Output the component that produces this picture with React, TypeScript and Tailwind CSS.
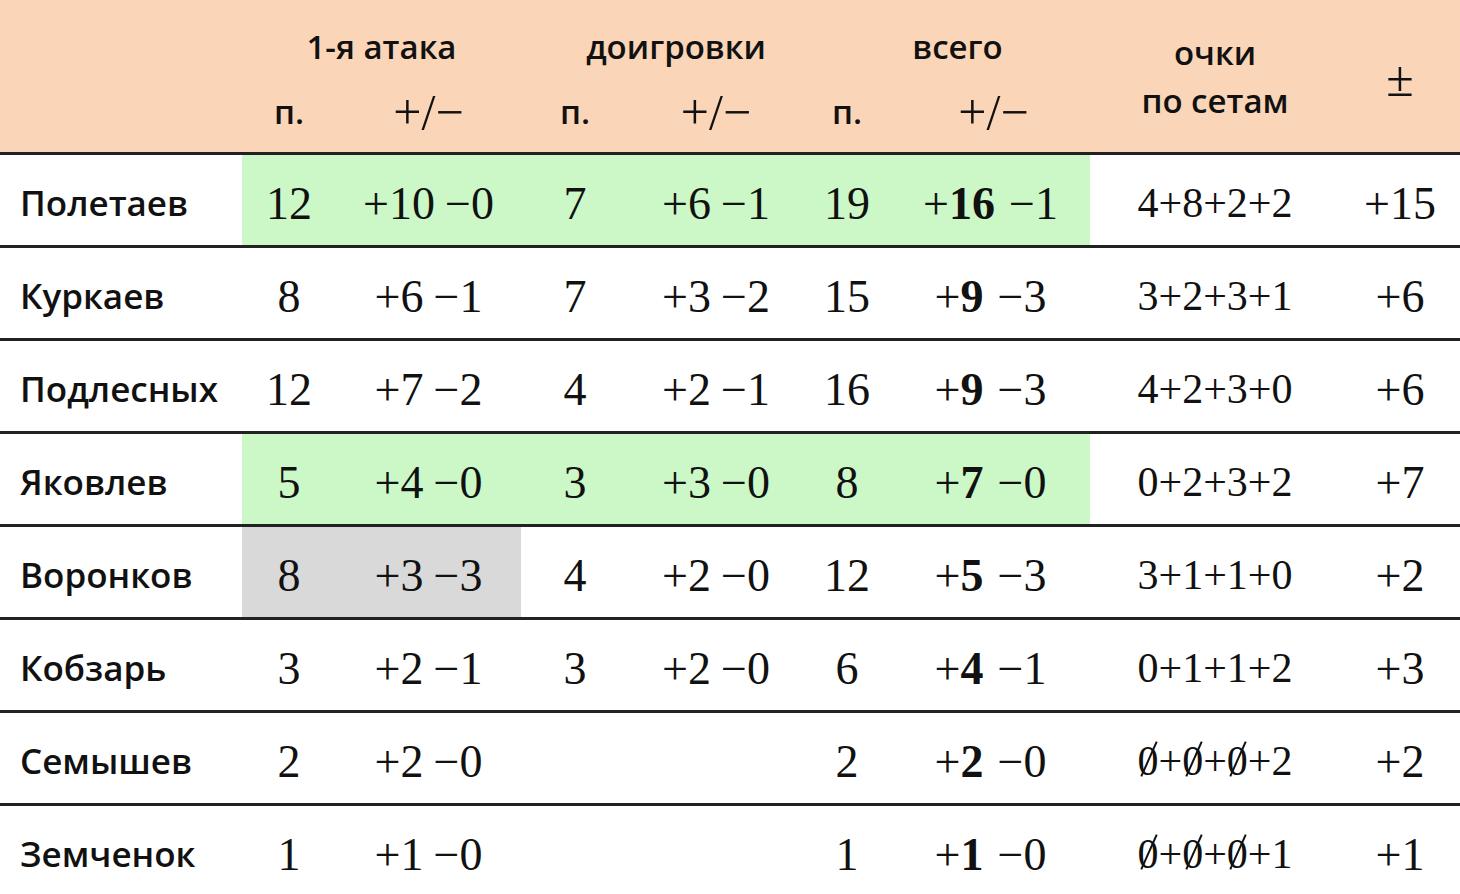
import React from 'react';

type Row = {
  name: string;
  p1: string;
  pm1: [string, string];
  p2: string;
  pm2: [string, string] | null;
  p3: string;
  pm3: [string, string];
  sets: string;
  total: string;
  green?: boolean;
  gray?: boolean;
};

const rows: Row[] = [
  { name: 'Полетаев', p1: '12', pm1: ['+10', '−0'], p2: '7', pm2: ['+6', '−1'], p3: '19', pm3: ['16', '−1'], sets: '4+8+2+2', total: '+15', green: true },
  { name: 'Куркаев', p1: '8', pm1: ['+6', '−1'], p2: '7', pm2: ['+3', '−2'], p3: '15', pm3: ['9', '−3'], sets: '3+2+3+1', total: '+6' },
  { name: 'Подлесных', p1: '12', pm1: ['+7', '−2'], p2: '4', pm2: ['+2', '−1'], p3: '16', pm3: ['9', '−3'], sets: '4+2+3+0', total: '+6' },
  { name: 'Яковлев', p1: '5', pm1: ['+4', '−0'], p2: '3', pm2: ['+3', '−0'], p3: '8', pm3: ['7', '−0'], sets: '0+2+3+2', total: '+7', green: true },
  { name: 'Воронков', p1: '8', pm1: ['+3', '−3'], p2: '4', pm2: ['+2', '−0'], p3: '12', pm3: ['5', '−3'], sets: '3+1+1+0', total: '+2', gray: true },
  { name: 'Кобзарь', p1: '3', pm1: ['+2', '−1'], p2: '3', pm2: ['+2', '−0'], p3: '6', pm3: ['4', '−1'], sets: '0+1+1+2', total: '+3' },
  { name: 'Семышев', p1: '2', pm1: ['+2', '−0'], p2: '', pm2: null, p3: '2', pm3: ['2', '−0'], sets: 'x+x+x+2', total: '+2' },
  { name: 'Земченок', p1: '1', pm1: ['+1', '−0'], p2: '', pm2: null, p3: '1', pm3: ['1', '−0'], sets: 'x+x+x+1', total: '+1' },
];

const sans = "font-['Open_Sans',sans-serif]";
const serif = "font-['Liberation_Serif',serif]";
const grid = 'grid grid-cols-[242px_94px_185px_108px_174px_88px_199px_250px_120px]';

const Cell: React.FC<{ bg?: string; children?: React.ReactNode }> = ({ bg = '', children }) => (
  <div className={`flex items-center justify-center pt-[6px] ${bg}`}>{children}</div>
);

// "0" with a slash through it, as in the set scores of players who did not play
const SlashZero: React.FC = () => (
  <span className="relative inline-block">
    0
    <span className="absolute left-1/2 top-[10px] h-[38px] w-[2px] bg-[#111] rotate-[24deg]" />
  </span>
);

const Sets: React.FC<{ value: string }> = ({ value }) => (
  <span>
    {value.split('').map((ch, i) => (ch === 'x' ? <SlashZero key={i} /> : <span key={i}>{ch}</span>))}
  </span>
);

const App: React.FC = () => {
  return (
    <div className="w-[1460px] h-[894px] overflow-hidden bg-white text-[#111]">
      {/* Header */}
      <div className={`${grid} bg-[#fad5b7] pt-[14px] pb-[8px] border-b-[3px] border-[#222] ${sans} font-semibold text-[33px]`}>
        <div className="row-span-2" />
        <div className="col-span-2 h-[66px] flex items-center justify-center">1-я атака</div>
        <div className="col-span-2 h-[66px] flex items-center justify-center pl-[28px]">доигровки</div>
        <div className="col-span-2 h-[66px] flex items-center justify-center pl-[22px]">всего</div>
        <div className="row-span-2 flex flex-col items-center justify-center leading-[48px] pb-[4px]">
          <span>очки</span>
          <span>по сетам</span>
        </div>
        <div className={`row-span-2 flex items-center justify-center ${serif} font-normal text-[50px]`}>±</div>

        <div className="h-[64px] flex items-center justify-center">п.</div>
        <div className={`h-[64px] flex items-center justify-center ${serif} font-normal text-[50px]`}>+/−</div>
        <div className="h-[64px] flex items-center justify-center">п.</div>
        <div className={`h-[64px] flex items-center justify-center ${serif} font-normal text-[50px]`}>+/−</div>
        <div className="h-[64px] flex items-center justify-center">п.</div>
        <div className={`h-[64px] flex items-center justify-center pl-[6px] ${serif} font-normal text-[50px]`}>+/−</div>
      </div>

      {/* Body */}
      {rows.map((r) => {
        const hl = r.green ? 'bg-[#ccf8c8]' : '';
        const g = r.gray ? 'bg-[#d9d9d9]' : hl;
        return (
          <div key={r.name} className={`${grid} h-[93px] border-b-[3px] border-[#222] ${serif} text-[46px]`}>
            <div className={`flex items-center pl-[20px] pt-[6px] ${sans} font-semibold text-[35px]`}>{r.name}</div>
            <Cell bg={g}>{r.p1}</Cell>
            <Cell bg={g}>
              <span>{r.pm1[0]}</span>
              <span className="ml-[10px]">{r.pm1[1]}</span>
            </Cell>
            <Cell bg={hl}>{r.p2}</Cell>
            <Cell bg={hl}>
              {r.pm2 && (
                <>
                  <span>{r.pm2[0]}</span>
                  <span className="ml-[10px]">{r.pm2[1]}</span>
                </>
              )}
            </Cell>
            <Cell bg={hl}>{r.p3}</Cell>
            <Cell bg={hl}>
              <span>
                +<b>{r.pm3[0]}</b>
              </span>
              <span className="ml-[14px]">{r.pm3[1]}</span>
            </Cell>
            <Cell>
              <span className="text-[42px]">
                <Sets value={r.sets} />
              </span>
            </Cell>
            <Cell>{r.total}</Cell>
          </div>
        );
      })}
    </div>
  );
};

export default App;
